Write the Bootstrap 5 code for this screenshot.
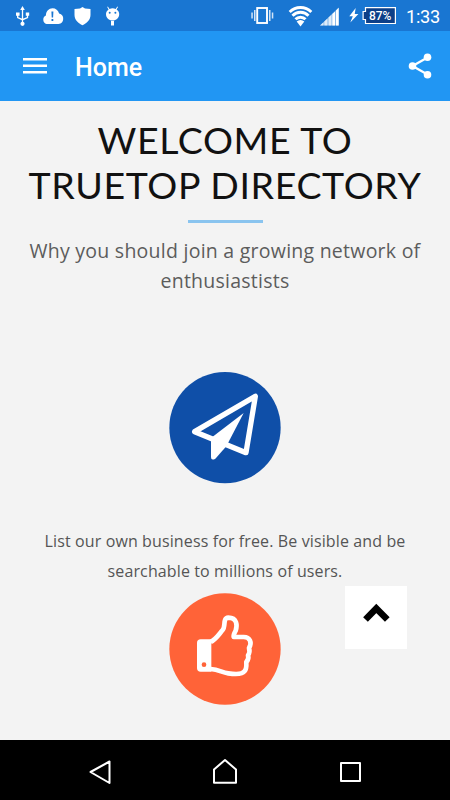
<!DOCTYPE html>
<html lang="en">
<head>
<meta charset="utf-8">
<meta name="viewport" content="width=device-width, initial-scale=1">
<title>Home</title>
<link href="https://cdn.jsdelivr.net/npm/bootstrap@5.3.0/dist/css/bootstrap.min.css" rel="stylesheet">
<style>
body{background:#f3f3f3;height:800px;overflow:hidden}
svg{display:block;flex:none}
.status-bar{height:31px;background:#1976d2;font-family:Roboto,sans-serif}
.app-bar{height:70px;background:#2196f3;font-family:Roboto,sans-serif}
.menu-icon{margin-left:7px}
.app-title{font-size:25px;font-weight:500;line-height:30px;margin-left:28px;padding-top:3px}
.clock{font-size:18.2px;line-height:31px;padding-top:1px;letter-spacing:-.3px}
.content{height:639px}
.hero-title{font:400 37.5px/45px Lato,sans-serif;color:#111;padding-top:16px}
.line-a{letter-spacing:.6px}
.line-b{letter-spacing:.63px}
.rule{width:75px;height:2.5px;background:#8ac4ef;margin-top:13px}
.sub{font:400 19.5px/30px "Open Sans",sans-serif;color:#5c5c5c;margin-top:13.5px;letter-spacing:.25px}
.desc{font:400 16px/30px "Open Sans",sans-serif;color:#555;margin-top:42px;letter-spacing:.12px}
.feature{margin-top:76px}
.feature-next{margin-top:7px}
.to-top{position:absolute;left:345px;top:485px;width:62px;height:63px}
.nav-keys{height:60px;background:#000}
</style>
</head>
<body class="d-flex flex-column">
<div class="status-bar d-flex text-white flex-shrink-0">
  <svg width="360" height="31" viewBox="0 0 360 31" fill="#fff">
    <g stroke="#fff" stroke-width="1.3" fill="none"><path d="M22.500 9v15M17.700 14v3.500l4.800 2.200 5-2.200V14"/></g>
    <path d="M22.500 6l2.300 4h-4.600zM16 12.500h3.600v3.300H16zM25.800 12.500h3.400v3.300h-3.400z"/><circle cx="22.500" cy="23.800" r="2.100"/>
    <path d="M46.500 24a4.500 4.500 0 0 1-.6-8.400C46 11 49 8.200 52.500 8.200c3.200 0 5.700 2 6.600 5.200A5.400 5.400 0 0 1 58.500 24z"/>
    <path d="M51.400 11.500h2l-.3 6h-1.400zM51.500 19h1.800v1.900h-1.800z" fill="#1976d2"/>
    <path d="M82.500 7l2.500 1.500 5.500.5v6c0 5-4 8.300-8 10.300-4-2-8-5.300-8-10.300V9l5.500-.5z"/>
    <path d="M106 14c0-2 1-3.500 2.600-4.600L107.200 7l.7-.4 1.600 2.300a8 8 0 0 1 6.200 0l1.600-2.300.7.400-1.400 2.400c1.700 1.100 2.600 2.600 2.600 4.600 0 4-3 6.500-6.600 6.500S106 18 106 14zM111 21h3v4.500h-3z"/>
    <circle cx="109.700" cy="12.700" r="1" fill="#1976d2"/><circle cx="115.400" cy="12.700" r="1" fill="#1976d2"/>
    <rect x="257.200" y="8" width="9.800" height="15" fill="none" stroke="#fff" stroke-width="1.900"/>
    <path d="M254 10h1.500v11H254zM251.300 12.500h1.500v6h-1.500zM269 10h1.500v11H269zM271.800 12.500h1.500v6h-1.500z" opacity=".8"/>
    <g fill="none" stroke="#fff" stroke-width="3"><path d="M289.700 12a15.500 15.500 0 0 1 21.600 0M292.500 15.700a11.200 11.200 0 0 1 16 0M295.500 19.300a7 7 0 0 1 10 0"/></g>
    <path d="M300.500 26.500l-3.800-5a5.300 5.300 0 0 1 7.600 0z"/>
    <path d="M320 25.500l3.500-3.300v3.300zM324.300 21.500l3.200-3v7h-3.200zM328.500 17.600l3-2.800v10.700h-3z" opacity=".75"/>
    <path d="M332.300 14l2.800-2.600v14.100h-2.800zM336 10.500l2.700-2.700v17.700H336z"/><path d="M320 25.500L338.700 7.500v18z" opacity=".45"/>
    <path d="M355.700 8l-6.400 8.300h3.500l-2.500 6.300 8.100-8.500h-3.700z"/>
  </svg>
  <svg width="38" height="31" viewBox="360 0 38 31"><path d="M365.500 7.600h29.900v15.900h-29.900v-4h-2.400v-8h2.400z" fill="#0d3f88" stroke="#fff" stroke-width="1.200"/><text x="380.200" y="20" text-anchor="middle" font-family="Roboto,sans-serif" font-size="12" font-weight="500" fill="#fff">87%</text></svg>
  <span class="clock ms-2">1:33</span>
</div>
<header class="app-bar d-flex align-items-center text-white flex-shrink-0 px-3">
  <svg class="menu-icon" width="24" height="18" viewBox="0 0 24 18"><path d="M0 2.200h24M0 8.800h24M0 15.300h24" stroke="#fff" stroke-width="2.400"/></svg>
  <div class="app-title">Home</div>
  <svg class="ms-auto" width="28" height="28" viewBox="0 0 28 28"><path d="M21.500 5.500L6.500 14l15 8.500" fill="none" stroke="#fff" stroke-width="2.300"/><g fill="#fff"><circle cx="21.500" cy="5.300" r="3.800"/><circle cx="6.500" cy="14" r="3.800"/><circle cx="21.500" cy="22.700" r="3.800"/></g></svg>
</header>
<main class="content position-relative d-flex flex-column align-items-center text-center flex-shrink-0">
  <h1 class="hero-title mb-0 text-nowrap"><span class="line-a">WELCOME TO</span><br><span class="line-b">TRUETOP DIRECTORY</span></h1>
  <div class="rule"></div>
  <p class="sub mb-0 text-nowrap">Why you should join a growing network of<br>enthusiastists</p>
  <svg class="feature" width="112" height="112" viewBox="27 35 336 336">
    <circle cx="195" cy="202" r="167" fill="#0f4fa8"/>
    <path d="M104 214L286 108 258 277z" fill="none" stroke="#fff" stroke-width="16" stroke-linejoin="round"/>
    <path d="M251 158L199 258 166 295q-13 7-13-5v-57z" fill="#fff"/>
  </svg>
  <p class="desc mb-0 text-nowrap">List our own business for free. Be visible and be<br>searchable to millions of users.</p>
  <svg class="feature-next" width="112" height="112" viewBox="27 38 336 336">
    <circle cx="195" cy="206" r="167" fill="#ff6338"/>
    <path d="M152 185C170 175 178 160 188 149C198 138 187 113 205 112C232 112 232 136 227 151Q220 163 221 170H251C270 170 277 187 267 203Q271 216 264 225Q268 236 259 245Q260 266 254 272C246 284 218 281 205 279C184 276 178 268 152 266" fill="none" stroke="#fff" stroke-width="14" stroke-linejoin="round"/>
    <path d="M122 177h32v97h-32q-11 0-11-11v-75q0-11 11-11z" fill="#fff"/><circle cx="132" cy="253" r="7" fill="#ff6338"/>
  </svg>
  <button class="to-top btn bg-white border-0 rounded-0 p-0" aria-label="Back to top"><svg width="62" height="63" viewBox="0 0 62 63"><path d="M20.500 33.500L31.300 22.500 42.300 33.500" fill="none" stroke="#000" stroke-width="6.600"/></svg></button>
</main>
<footer class="nav-keys flex-shrink-0">
  <svg width="450" height="60" viewBox="0 740 450 60" fill="none" stroke="#fff" stroke-width="2" stroke-linejoin="round"><path d="M90.500 772L109.500 761.500V783zM214 782.700V769.500L225 760l11 9.500v13.200zM341 763h19v18h-19z"/></svg>
</footer>
<script src="https://cdn.jsdelivr.net/npm/bootstrap@5.3.0/dist/js/bootstrap.bundle.min.js"></script>
</body>
</html>
